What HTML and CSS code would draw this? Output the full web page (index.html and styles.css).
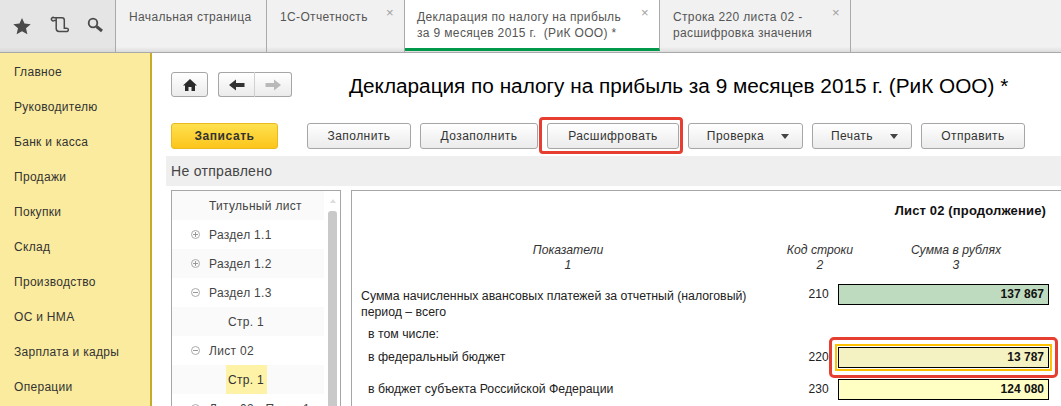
FILE: index.html
```html
<!DOCTYPE html>
<html lang="ru">
<head>
<meta charset="utf-8">
<title>Декларация</title>
<link rel="stylesheet" href="styles.css">
</head>
<body>
<header class="topbar">
  <div class="tools">
    <svg class="ico" width="22" height="22" viewBox="0 0 22 22"><path fill="#4a4a4a" d="M11 3l2.5 5.600 6.200.6-4.700 4.100 1.400 6L11 16.200l-5.400 3.100 1.400-6-4.700-4.100 6.200-.6z"/></svg>
    <svg class="ico" width="20" height="22" viewBox="0 0 20 22"><path fill="none" stroke="#4a4a4a" stroke-width="1.500" d="M7 5.500H5.200A1.700 1.700 0 1 1 5.200 2.800H13C14.800 2.800 15.300 3.800 15.300 5.200V13.200H17.200A1.700 1.700 0 1 1 17.200 16.500H10C8 16.500 7.200 15.400 7.200 13.600V3.500"/></svg>
    <svg class="ico" width="20" height="22" viewBox="0 0 20 22"><circle cx="8" cy="8" r="4.300" fill="none" stroke="#4a4a4a" stroke-width="1.800"/><path stroke="#4a4a4a" stroke-width="3" d="M11.500 11.500l5.500 4.500"/></svg>
  </div>
  <div class="tab tab-a"><span>Начальная страница</span></div>
  <div class="tab tab-b"><span>1С-Отчетность</span><i class="x">×</i></div>
  <div class="tab tab-c active"><span>Декларация по налогу на прибыль<br>за 9 месяцев 2015 г.&nbsp; (РиК ООО) *</span><i class="x">×</i></div>
  <div class="tab tab-d"><span>Строка 220 листа 02 -<br>расшифровка значения</span><i class="x">×</i></div>
</header>
<div class="main">
  <nav class="side">
    <a>Главное</a><a>Руководителю</a><a>Банк и касса</a><a>Продажи</a><a>Покупки</a><a>Склад</a><a>Производство</a><a>ОС и НМА</a><a>Зарплата и кадры</a><a>Операции</a>
  </nav>
  <section class="content">
    <div class="head">
      <button class="btn home"><svg width="16" height="14" viewBox="0 0 16 14"><path fill="#2a2a2a" d="M8 1l7 6.500h-2V13H9.500V9h-3v4H3V7.500H1z"/></svg></button>
      <div class="navgroup">
        <button class="btn nav"><svg width="16" height="12" viewBox="0 0 16 12"><path fill="#333" d="M0 6l7-5.500V4h8.500v4H7v3.500z"/></svg></button>
        <button class="btn nav"><svg width="16" height="12" viewBox="0 0 16 12"><path fill="#b9b9b9" d="M16 6L9 .5V4H.5v4H9v3.500z"/></svg></button>
      </div>
      <h1>Декларация по налогу на прибыль за 9 месяцев 2015 г. (РиК ООО) *</h1>
    </div>
    <div class="toolbar">
      <button class="btn save">Записать</button>
      <button class="btn w-fill">Заполнить</button>
      <button class="btn w-more">Дозаполнить</button>
      <button class="btn w-dec mark">Расшифровать</button>
      <button class="btn w-check">Проверка<b class="caret"></b></button>
      <button class="btn w-print">Печать<b class="caret"></b></button>
      <button class="btn w-send">Отправить</button>
    </div>
    <div class="status">Не отправлено</div>
    <div class="panels">
      <div class="tree">
        <ul class="rows">
          <li class="alt">Титульный лист</li>
          <li><i class="sign plus"></i>Раздел 1.1</li>
          <li class="alt"><i class="sign plus"></i>Раздел 1.2</li>
          <li><i class="sign"></i>Раздел 1.3</li>
          <li class="alt sub"><em>Стр. 1</em></li>
          <li><i class="sign"></i>Лист 02</li>
          <li class="alt sub"><em class="sel">Стр. 1</em></li>
          <li><i class="sign plus"></i>Лист 02 - Прил. 1</li>
        </ul>
        <div class="scroll"><b class="up"></b><b class="thumb"></b></div>
      </div>
      <div class="doc">
        <div class="doc-title">Лист 02 (продолжение)</div>
        <div class="doc-head">
          <div>Показатели<br>1</div>
          <div>Код строки<br>2</div>
          <div>Сумма в рублях<br>3</div>
        </div>
        <div class="line l210">
          <div class="label">Сумма начисленных авансовых платежей за отчетный (налоговый)<br>период – всего</div>
          <div class="code">210</div>
          <div class="cell green">137 867</div>
        </div>
        <div class="note">в том числе:</div>
        <div class="line l220">
          <div class="label ind">в федеральный бюджет</div>
          <div class="code">220</div>
          <div class="cell pale focus">13 787</div>
        </div>
        <div class="line l230">
          <div class="label ind">в бюджет субъекта Российской Федерации</div>
          <div class="code">230</div>
          <div class="cell yellow">124 080</div>
        </div>
      </div>
    </div>
  </section>
</div>
</body>
</html>
```
FILE: styles.css
```css
* { box-sizing: border-box; }
html, body { margin: 0; height: 100%; }
body { width: 1061px; height: 406px; overflow: hidden; background: #fff; font-family: "Liberation Sans", Arial, sans-serif; font-size: 12px; color: #333; }

.topbar { display: flex; height: 53px; background: linear-gradient(#f1f1f1 47px, #dcdcdc 52px); border-bottom: 1px solid #a9a9a9; }
.tools { width: 116px; background: linear-gradient(#e5e5e5 47px, #d8d8d8 52px); border-right: 1px solid #aaa; display: flex; align-items: center; gap: 16px; padding: 0 0 0 11px; }
.ico { display: block; flex: none; }
.tab { position: relative; border-right: 1px solid #aaa; padding: 9px 0 0 13px; line-height: 16px; font-size: 12px; letter-spacing: .35px; color: #555; }
.tab-a { width: 151px; }
.tab-b { width: 138px; }
.tab-c { width: 255px; padding-left: 12px; background: #fff; border-bottom: 3px solid #00984a; margin-bottom: 1px; }
.tab-d { width: 191px; }
.x { position: absolute; right: 10px; top: 6px; font-style: normal; font-size: 13px; line-height: 13px; color: #a0a0a0; }

.main { display: flex; height: 353px; }
.side { width: 152px; background: #fbeb9e; border-right: 2px solid #c9ab2b; padding-top: 1px; }
.side a { display: block; height: 35px; padding: 10px 0 0 14px; line-height: 16px; letter-spacing: .3px; color: #333; }
.content { flex: 1; min-width: 0; padding-left: 14px; }

.btn { display: block; padding: 0; font: inherit; color: #333; letter-spacing: .45px; border: 1px solid #a6a6a6; border-radius: 3px; background: linear-gradient(#fff, #ebebeb); }
.head { display: flex; align-items: flex-start; padding: 19px 0 0 5px; height: 70px; }
.home { width: 37px; height: 25px; display: flex; align-items: center; justify-content: center; }
.navgroup { display: flex; margin-left: 10px; }
.nav { width: 37px; height: 25px; display: flex; align-items: center; justify-content: center; }
.nav:first-child { border-radius: 3px 0 0 3px; border-right-color: #d0d0d0; }
.nav:last-child { border-left: 0; border-radius: 0 3px 3px 0; }
.head h1 { margin: 1px 0 0 57px; font-size: 20.750px; line-height: 26px; font-weight: 400; color: #000; white-space: nowrap; }

.toolbar { display: flex; height: 26px; padding-left: 5px; }
.toolbar .btn { height: 26px; position: relative; }
.save { width: 107px; border-color: #eab91f; background: linear-gradient(#fee14f, #fcc51c); font-weight: 700; letter-spacing: .55px; color: #333; }
.w-fill { width: 104px; margin-left: 29px; }
.w-more { width: 118px; margin-left: 9px; }
.w-dec { width: 132px; margin-left: 9px; }
.w-check { width: 115px; margin-left: 9px; padding-right: 20px; }
.w-print { width: 100px; margin-left: 9px; padding-right: 20px; }
.w-send { width: 104px; margin-left: 9px; }
.mark::after { content: ""; position: absolute; left: -9px; top: -7px; right: -5px; bottom: -6px; border: 3px solid #e63e31; border-radius: 4px; }
.caret { position: absolute; right: 13px; top: 10px; border: 4px solid transparent; border-top: 5px solid #444; border-bottom: 0; }

.status { height: 30px; margin-top: 7px; background: #efefef; line-height: 30px; padding-left: 5px; font-size: 14px; letter-spacing: .3px; color: #444; }

.panels { display: flex; height: 216px; margin-top: 4px; padding-left: 5px; }
.tree { position: relative; width: 170px; border: 1px solid #a6a6a6; border-bottom: 0; overflow: hidden; }
.rows { margin: 0; padding: 0; list-style: none; width: 152px; }
.rows li { display: flex; align-items: center; height: 29px; padding-left: 37px; letter-spacing: .3px; color: #444; white-space: nowrap; position: relative; }
.rows .alt { background: #fafafa; }
.rows .sub { padding-left: 54px; }
.rows em { font-style: normal; display: flex; align-items: center; height: 100%; padding-left: 2px; }
.rows .sel { background: #fdf2a6; width: 41px; color: #333; }
.sign { position: absolute; left: 19px; top: 10px; width: 9px; height: 9px; border: 1px solid #aaa; border-radius: 50%; }
.sign::before { content: ""; position: absolute; left: 1px; right: 1px; top: 3px; height: 1px; background: #999; }
.plus::after { content: ""; position: absolute; top: 1px; bottom: 1px; left: 3px; width: 1px; background: #999; }
.scroll { position: absolute; right: 3px; top: 0; bottom: 0; width: 9px; }
.scroll .up { position: absolute; left: 2px; top: 8px; border: 3px solid transparent; border-bottom: 4px solid #ddd; border-top: 0; }
.scroll .thumb { position: absolute; left: 0; top: 20px; bottom: 0; width: 9px; background: #c9c9c9; border-radius: 3px 3px 0 0; }

.doc { flex: 1; margin-left: 10px; border: 1px solid #a6a6a6; border-width: 1px 0 0 1px; padding-left: 9px; font-size: 12.300px; color: #222; }
.doc-title { text-align: right; font-weight: 700; font-size: 13px; letter-spacing: .15px; line-height: 14px; padding: 13px 15px 0 0; color: #111; }
.doc-head { display: grid; grid-template-columns: 414px 90px 182px; height: 32px; margin-top: 25px; text-align: center; font-style: italic; line-height: 15px; color: #333; font-size: 12.200px; }
.line { display: grid; grid-template-columns: 420px 57px 211px; align-items: start; }
.label { line-height: 16px; white-space: nowrap; }
.ind { padding-left: 7px; line-height: 21px; }
.code { font-size: 12px; letter-spacing: .2px; line-height: 21px; text-align: right; padding-right: 9px; }
.cell { height: 21px; border: 1px solid #000; text-align: right; padding-right: 4px; font-weight: 700; font-size: 12px; line-height: 19px; color: #111; position: relative; }
.green { background: #bfdbbf; }
.pale { background: #f4f2c2; }
.yellow { background: #ffffc4; }
.focus { outline: 2px solid #ffc000; outline-offset: 1px; }
.focus::after { content: ""; position: absolute; left: -10px; top: -11px; right: -10px; bottom: -11px; border: 3px solid #e63e31; border-radius: 5px; }
.l210 { margin-top: 13px; }
.l210 .cell, .l210 .code { margin-top: -4px; }
.note { margin: 6px 0 0 7px; line-height: 16px; }
.l220 { margin-top: 5px; }
.l230 { margin-top: 11px; }
```
